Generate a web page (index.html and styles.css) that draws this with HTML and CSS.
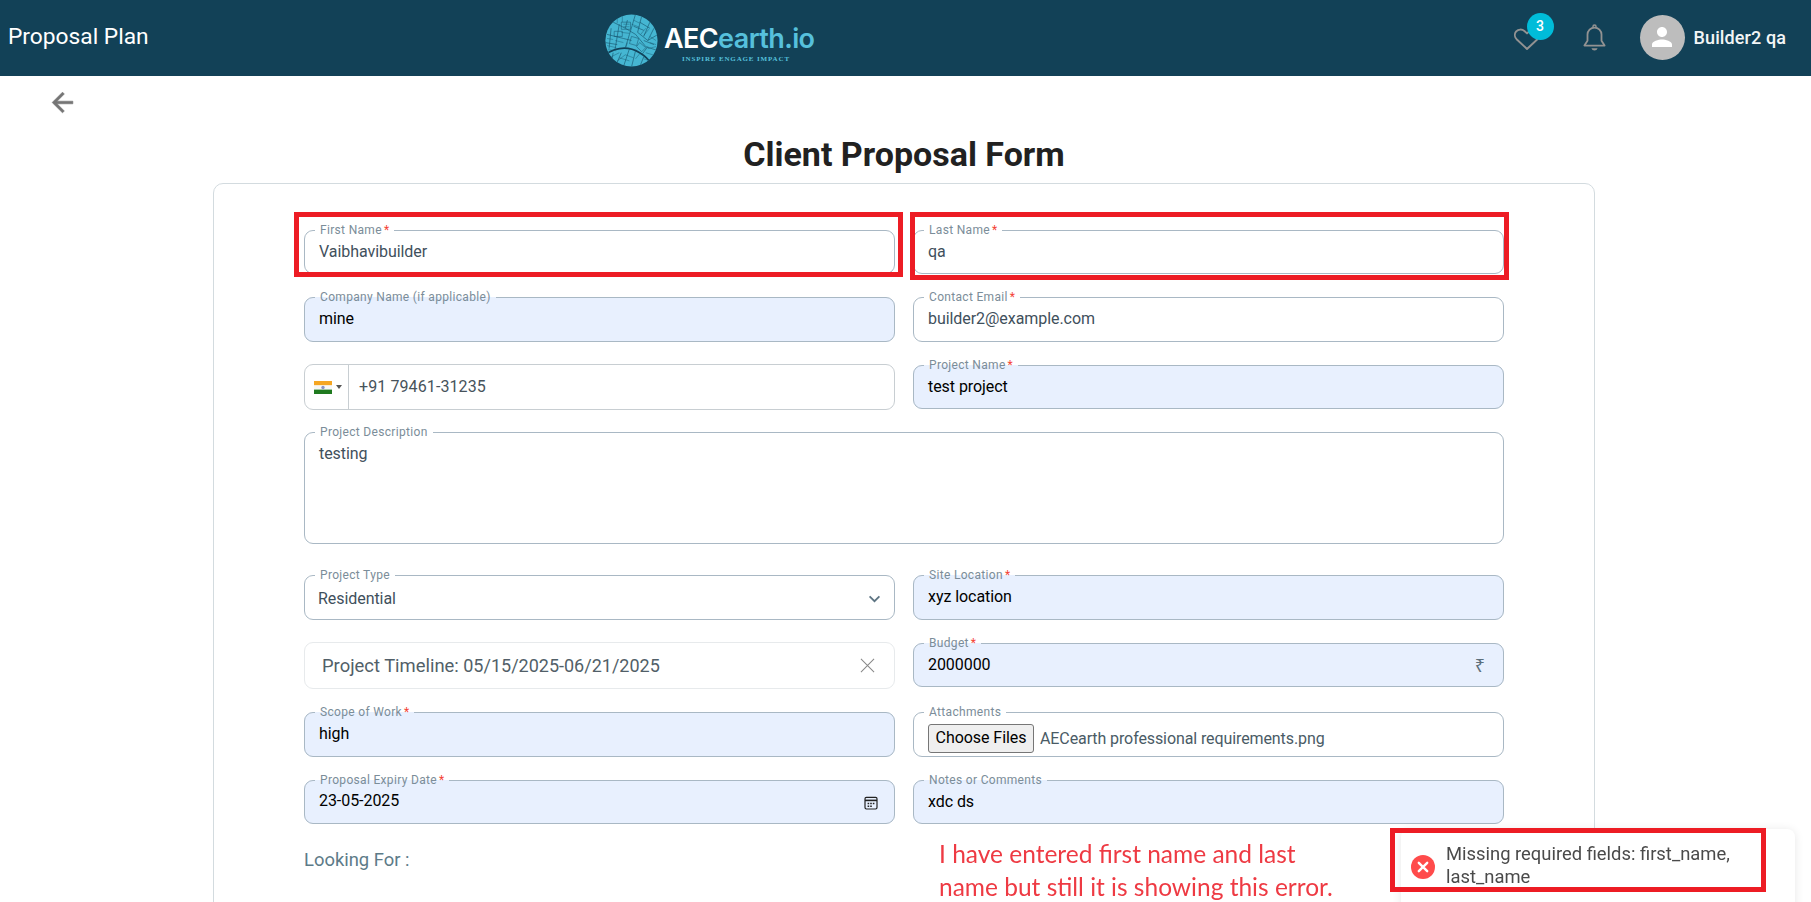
FILE: index.html
```html
<!DOCTYPE html>
<html lang="en">
<head>
<meta charset="utf-8">
<title>Proposal Plan</title>
<link rel="stylesheet" href="styles.css">
</head>
<body>
<header class="topbar">
  <div class="page-title">Proposal Plan</div>
  <div class="brand">
    <svg class="brand-globe" viewBox="0 0 52 52" aria-hidden="true">
      <defs><clipPath id="globe"><circle cx="26" cy="26" r="25.6"/></clipPath></defs>
      <circle cx="26" cy="26" r="25.6" fill="#45b6d2"/>
      <g clip-path="url(#globe)" fill="none" stroke="#15526b" stroke-width=".6">
        <path d="M0 40C12 32 24 32 34 38S46 50 48 52" stroke-width="1.7" stroke="#124259"/>
        <path d="M30 0L24 20 20 33M36 2L32 18 42 26 52 20M8 8L20 14 30 20 40 32 52 36M2 20L18 24 26 26M0 28L12 30M14 10L10 34M6 14L4 34M24 34L18 52M30 36L26 52M38 42L34 52M42 32L36 40M44 8L38 22M48 14L42 26M16 38L10 52M8 38L6 50M34 8L44 14M28 12L38 16M22 6L20 14M38 26L48 30"/>
        <path d="M16 8h9v7h-9zM26 22l7 2-2 7-7-2zM9 17h8v5H9zM34 28l6 5-4 4-5-5z" stroke-width=".5"/>
        <path d="M12 3v6M17 2v6M2 31l9 2M3 35l8 1M20 40l8 3M14 43l10 3M40 38l10 3M38 44l10 3M44 22l6 4M10 26l8 2M16 18l8 1M18 10h6M18 12.500h6M28 6l6 3M26 10l8 3M35 20l5-6M38 21l5-6M42 34l8-2M44 28l6 2M2 24l6 1M22 28l-2 6M6 42l8-4M12 46l8-6M30 44l4-5" stroke-width=".4"/>
      </g>
    </svg>
    <div class="brand-text">
      <div class="brand-name">AEC<span class="brand-accent">earth.io</span></div>
      <div class="brand-tag">INSPIRE ENGAGE IMPACT</div>
    </div>
  </div>
  <div class="account">
    <div class="wish">
      <svg class="wish-icon" viewBox="0 0 26 22" aria-hidden="true"><path d="M13 21L2.6 11.2A5.8 5.8 0 0 1 2.2 3.400 6 6 0 0 1 10.400 3L13 5.400 15.600 3a6 6 0 0 1 8.200.4 5.800 5.800 0 0 1-.4 7.800z" fill="none" stroke="#929292" stroke-width="1.9" stroke-linejoin="round"/></svg>
      <span class="wish-badge">3</span>
    </div>
    <svg class="bell" viewBox="0 0 23 27" aria-hidden="true"><path d="M11.500 3.600a7 7 0 0 0-7 7v6.200L1.400 21.600h20.200l-3.100-4.800v-6.200a7 7 0 0 0-7-7z" fill="none" stroke="#929292" stroke-width="1.8" stroke-linejoin="round"/><path d="M10 3.400V2.600a1.500 1.500 0 0 1 3 0v.8" fill="none" stroke="#929292" stroke-width="1.500"/><path d="M8.400 24.200h6.200a3.200 3.200 0 0 1-6.200 0z" fill="#929292"/></svg>
    <div class="avatar">
      <svg viewBox="0 0 24 24" aria-hidden="true"><path d="M12 12c2.210 0 4-1.790 4-4s-1.790-4-4-4-4 1.790-4 4 1.790 4 4 4zm0 2c-2.670 0-8 1.340-8 4v2h16v-2c0-2.660-5.330-4-8-4z" fill="#fff"/></svg>
    </div>
    <div class="user-name">Builder2 qa</div>
  </div>
</header>

<main class="content">
  <svg class="back" viewBox="0 0 24 24" aria-hidden="true"><path d="M20 11H7.830l5.590-5.590L12 4l-8 8 8 8 1.410-1.410L7.830 13H20v-2z" fill="#757575" stroke="#757575" stroke-width=".5"/></svg>
  <h1 class="form-title">Client Proposal Form</h1>
  <section class="card">
    <form class="form-grid">
      <fieldset class="field"><legend>First Name<b>*</b></legend><div class="value">Vaibhavibuilder</div></fieldset>
      <fieldset class="field"><legend>Last Name<b>*</b></legend><div class="value">qa</div></fieldset>

      <fieldset class="field filled"><legend>Company Name (if applicable)</legend><div class="value">mine</div></fieldset>
      <fieldset class="field"><legend>Contact Email<b>*</b></legend><div class="value">builder2@example.com</div></fieldset>

      <div class="phone">
        <div class="phone-flag">
          <svg class="flag" viewBox="0 0 18 13" aria-hidden="true"><rect width="18" height="4.400" fill="#f5a623"/><rect y="4.400" width="18" height="4.200" fill="#f7f7f7"/><rect y="8.600" width="18" height="4.400" fill="#1f7a1f"/><circle cx="9" cy="6.500" r="1.700" fill="#8a94c4"/></svg>
          <span class="caret"></span>
        </div>
        <div class="phone-number">+91 79461-31235</div>
      </div>
      <fieldset class="field filled"><legend>Project Name<b>*</b></legend><div class="value">test project</div></fieldset>

      <fieldset class="field wide"><legend>Project Description</legend><div class="value">testing</div></fieldset>

      <fieldset class="field select"><legend>Project Type</legend><div class="value-row select-row"><span>Residential</span>
        <svg class="chevron" viewBox="0 0 14 9" aria-hidden="true"><path d="M1.500 1.500L7 7l5.500-5.500" fill="none" stroke="#5d7482" stroke-width="2"/></svg></div></fieldset>
      <fieldset class="field filled"><legend>Site Location<b>*</b></legend><div class="value">xyz location</div></fieldset>

      <div class="timeline"><span class="timeline-text"><span class="timeline-label">Project Timeline:</span> 05/15/2025-06/21/2025</span>
        <svg class="clear" viewBox="0 0 16 16" aria-hidden="true"><path d="M1 1l14 14M15 1L1 15" stroke="#888" stroke-width="1.100" fill="none"/></svg></div>
      <fieldset class="field filled short"><legend>Budget<b>*</b></legend><div class="value-row"><span>2000000</span><span class="rupee">₹</span></div></fieldset>

      <fieldset class="field filled"><legend>Scope of Work<b>*</b></legend><div class="value">high</div></fieldset>
      <fieldset class="field"><legend>Attachments</legend><div class="file-row"><span class="file-btn">Choose Files</span><span class="file-name">AECearth professional requirements.png</span></div></fieldset>

      <fieldset class="field filled"><legend>Proposal Expiry Date<b>*</b></legend><div class="value-row"><span>23-05-2025</span>
        <svg class="calendar" viewBox="0 0 14 14" aria-hidden="true"><rect x="1" y="1.400" width="12" height="11.600" rx="1.400" fill="none" stroke="#222" stroke-width="1.200"/><path d="M1 4.400h12" stroke="#222" stroke-width="1.600"/><path d="M3.600 6.800h1.600v1.500H3.600zM6.200 6.800h1.600v1.500H6.200zM8.800 6.800h1.600v1.500H8.800zM3.600 9.400h1.600v1.500H3.600zM6.200 9.400h1.600v1.500H6.200z" fill="#222"/></svg></div></fieldset>
      <fieldset class="field filled"><legend>Notes or Comments</legend><div class="value">xdc ds</div></fieldset>
    </form>
    <div class="looking-for">Looking For :</div>
  </section>
</main>

<div class="toast">
  <svg class="toast-icon" viewBox="0 0 24 24" aria-hidden="true"><circle cx="12" cy="12" r="12" fill="#ff4b4b"/><path d="M7.800 7.800l8.400 8.400M16.200 7.800l-8.400 8.400" stroke="#fff" stroke-width="2.400" stroke-linecap="round"/></svg>
  <div class="toast-text">Missing required fields: first_name, last_name</div>
</div>

<div class="mark mark-first"></div>
<div class="mark mark-last"></div>
<div class="mark mark-toast"></div>
<div class="note">I have entered first name and last<br>name but still it is showing this error.</div>
</body>
</html>
```

FILE: styles.css
```css
html, body {
  margin: 0;
  height: 902px;
  overflow: hidden;
  background: #fff;
  font-family: Roboto, "Liberation Sans", sans-serif;
}
* { box-sizing: border-box; }

.topbar {
  height: 76px;
  background: #124157;
  display: grid;
  grid-template-columns: 606px 1fr auto;
  align-items: center;
  padding: 0 25px 0 8px;
  color: #fff;
}
.page-title { font-size: 22.75px; line-height: 28px; margin-top: -3px; }
.brand { display: flex; align-items: center; margin-left: -9px; margin-top: 5px; }
.brand-globe { width: 53px; height: 53px; flex: none; }
.brand-text { margin-left: 6px; margin-top: 6px; }
.brand-name { font-family: Inter, sans-serif; font-weight: 600; font-size: 27px; line-height: 30px; letter-spacing: -.6px; color: #fff; }
.brand-accent { color: #56c0dc; }
.brand-tag { font-family: "Liberation Serif", serif; font-weight: 700; font-size: 7px; line-height: 8px; letter-spacing: .85px; color: #56c0dc; margin: 1px 0 0 18px; }

.account { display: flex; align-items: center; margin-top: -2px; }
.wish { position: relative; width: 26px; height: 22px; margin-top: 4px; }
.wish-icon { display: block; width: 26px; height: 22px; }
.wish-badge {
  position: absolute;
  left: 13px;
  top: -15px;
  width: 27px;
  height: 27px;
  border-radius: 50%;
  background: #00bcd9;
  font-size: 14px;
  font-weight: 500;
  line-height: 27px;
  text-align: center;
  color: #fff;
}
.bell { width: 23px; height: 27px; margin-left: 43px; }
.avatar { width: 45px; height: 45px; border-radius: 50%; background: #bdbdbd; margin-left: 34px; display: flex; align-items: center; justify-content: center; }
.avatar svg { width: 30px; height: 30px; }
.user-name { font-size: 18px; font-weight: 500; margin-left: 9px; color: #f2f5f6; letter-spacing: .1px; }

.content { display: block; }
.back { display: block; width: 31px; height: 31px; margin: 11px 0 0 47px; }
.form-title { margin: 15px 0 0; width: 1808px; text-align: center; font-size: 34px; line-height: 42px; font-weight: 700; color: #212121; }
.card {
  width: 1382px;
  height: 800px;
  margin: 8px 0 0 213px;
  border: 1px solid #d3dbdf;
  border-radius: 10px;
  padding: 40px 90px 0;
}
.form-grid {
  display: grid;
  grid-template-columns: 591px 591px;
  grid-template-rows: 50px 51px 50px 126px 51px 52px 51px 50px;
  column-gap: 18px;
  row-gap: 17px;
}
.field {
  margin: 0;
  min-width: 0;
  padding: 0 14px;
  border: 1px solid #a9b8c4;
  border-radius: 9px;
  color: #3f505c;
  font-size: 16px;
  letter-spacing: -.06px;
}
.field legend {
  margin-left: -4px;
  padding: 0 5px;
  font-size: 12px;
  line-height: 13px;
  color: #7b8d99;
  letter-spacing: .32px;
}
.field legend b { color: #f44336; font-weight: 400; margin-left: 2px; }
.filled { background: #e8f0fe; color: #000; }
.wide { grid-column: 1 / -1; margin-bottom: 8px; }
.short { height: 50px; }
.value { line-height: 20px; padding-top: 5px; }
.value-row { display: flex; align-items: center; justify-content: space-between; line-height: 20px; padding-top: 4px; }
.short .value-row { padding-top: 5px; }
.select-row { padding: 7px 0 0; margin-left: -1px; }
.chevron { width: 13px; height: 8px; margin-right: -1px; }
.rupee { font-family: "Noto Sans", sans-serif; color: #5d6f7b; font-size: 18px; margin-right: 4px; }
.calendar { width: 14px; height: 14px; margin: 3px 2px 0 0; }

.phone {
  margin-top: 5px;
  display: flex;
  border: 1px solid #c8ced2;
  border-radius: 9px;
  height: 46px;
}
.phone-flag { width: 44px; padding-left: 9px; display: flex; align-items: center; border-right: 1px solid #c8ced2; }
.flag { width: 18px; height: 13px; }
.caret { margin-left: 4px; border-left: 3px solid transparent; border-right: 3px solid transparent; border-top: 4px solid #555; }
.phone-number { padding-left: 10px; font-size: 16px; line-height: 43px; color: #47535b; letter-spacing: .1px; }

.timeline {
  margin-top: 5px;
  padding: 0 19px 0 17px;
  display: flex;
  align-items: center;
  justify-content: space-between;
  border: 1px solid #e7eaec;
  border-radius: 9px;
  color: #525f68;
  font-size: 18px;
}
.timeline-label { font-size: 18.4px; }
.clear { width: 15px; height: 15px; }

.file-row { display: flex; align-items: center; font-size: 16px; margin-top: 5px; }
.file-btn {
  width: 106px;
  height: 29px;
  border: 1px solid #767676;
  border-radius: 3px;
  background: #efefef;
  color: #000;
  line-height: 26px;
  text-align: center;
}
.file-name { margin-left: 6px; color: #4a5b66; letter-spacing: -.1px; }

.looking-for { margin-top: 25px; font-size: 18.4px; line-height: 22px; color: #5d7b88; }

.toast {
  position: fixed;
  left: 1401px;
  top: 829px;
  width: 394px;
  height: 90px;
  padding: 13px 30px 0 10px;
  display: flex;
  align-items: flex-start;
  background: #fff;
  border-radius: 8px;
  box-shadow: 0 1px 10px rgba(0, 0, 0, .1);
  color: #4a4a4a;
  font-size: 18.4px;
  line-height: 23px;
}
.toast-icon { width: 24px; height: 24px; flex: none; margin: 13px 11px 0 0; }

.mark { position: fixed; border: 5px solid #ed1c24; }
.mark-first { left: 294px; top: 212px; width: 609px; height: 65px; }
.mark-last { left: 910px; top: 212px; width: 599px; height: 68px; }
.mark-toast { left: 1390px; top: 828px; width: 376px; height: 64px; }
.note {
  position: fixed;
  left: 939px;
  top: 837px;
  font-family: Lato, sans-serif;
  font-size: 24.5px;
  line-height: 33px;
  color: #ee3a43;
  white-space: nowrap;
}
```
